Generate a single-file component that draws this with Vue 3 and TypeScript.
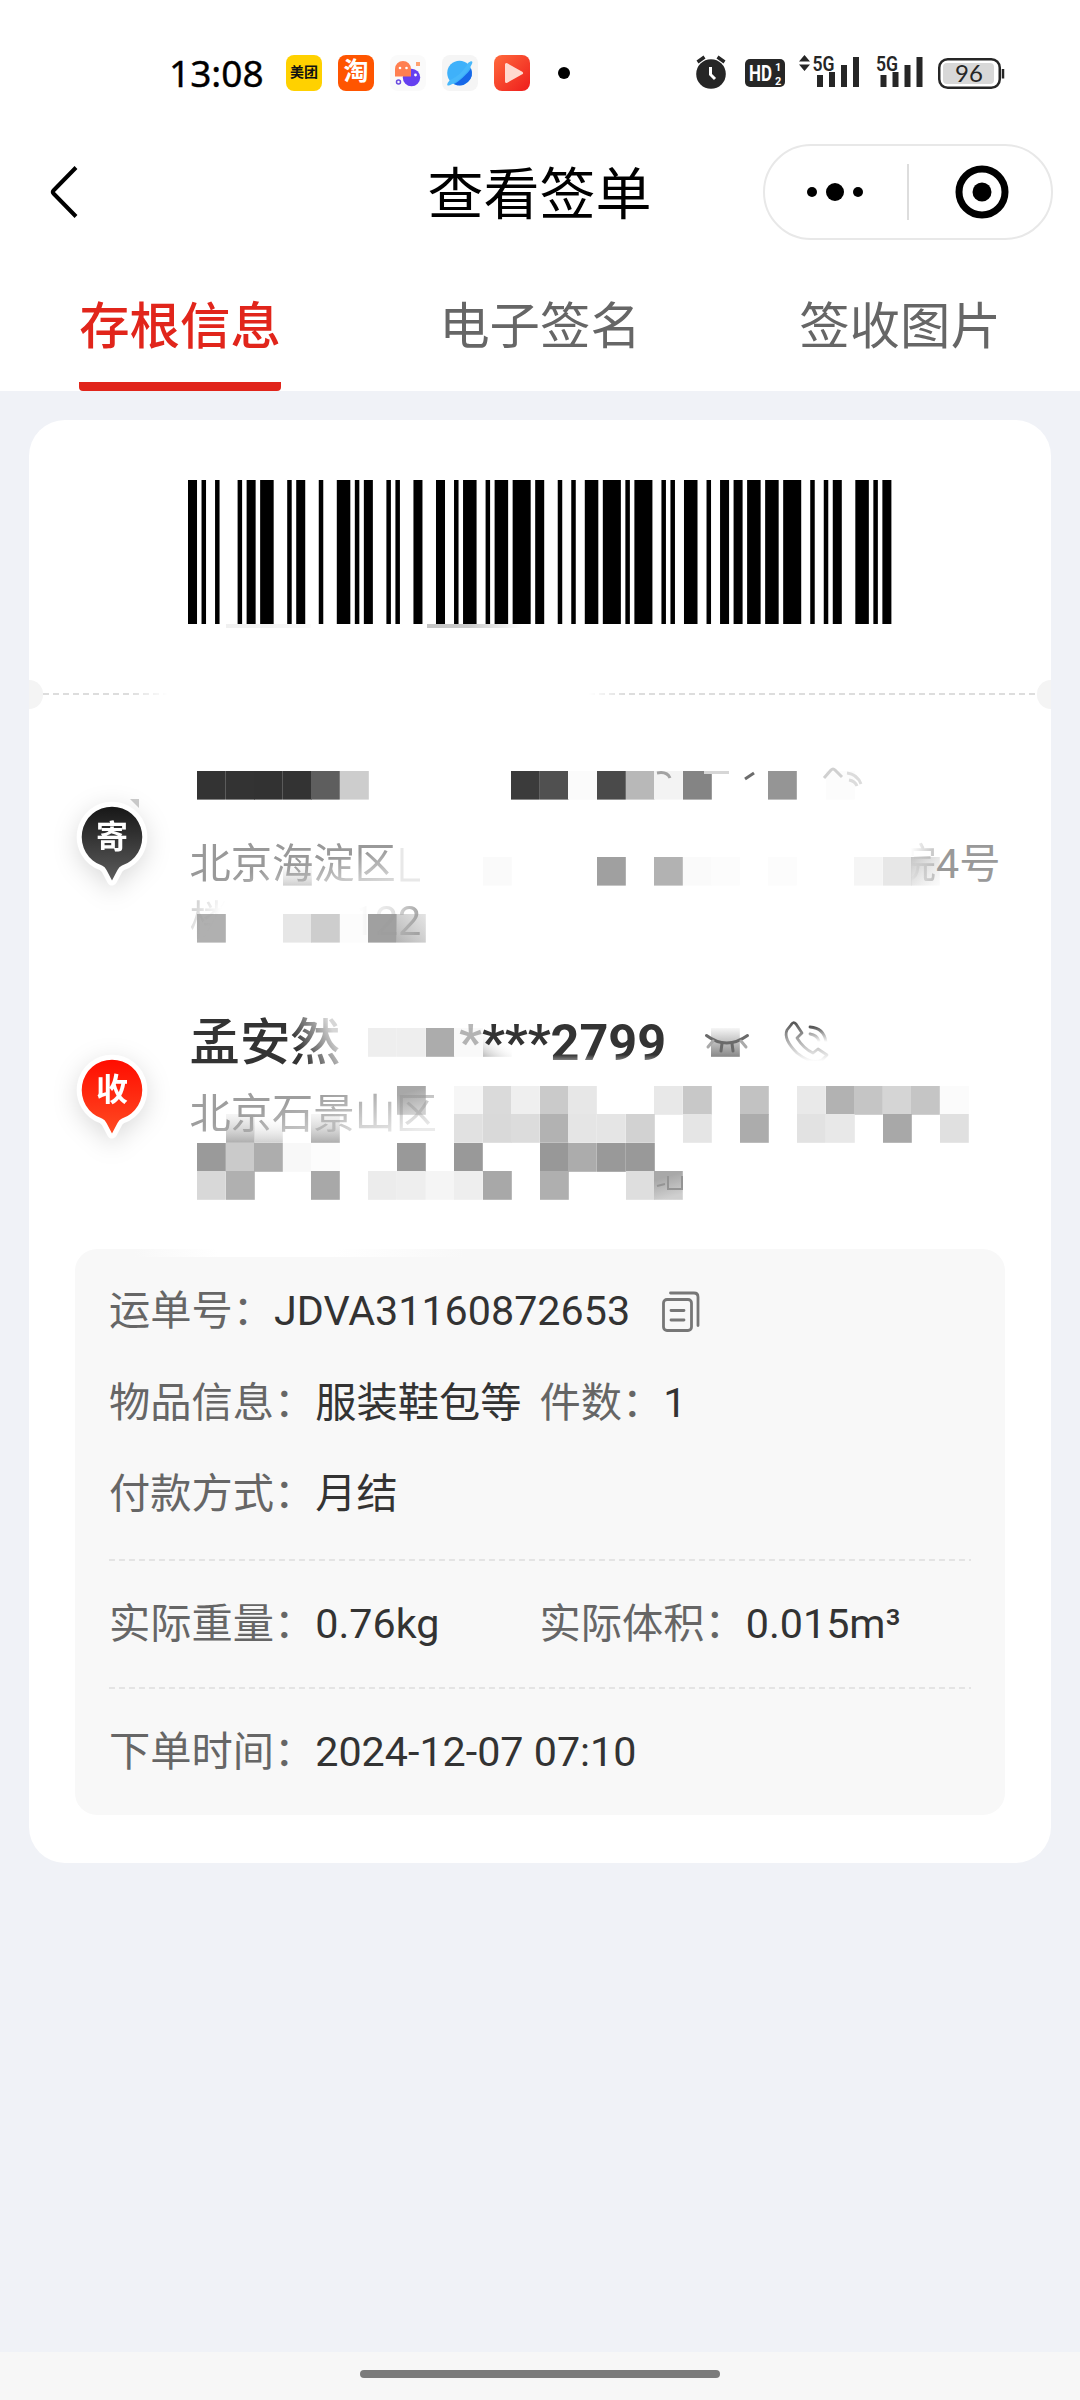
<script setup lang="ts">
interface Bar { x: number; w: number }
interface Cell { x: number; y: number; fill: string }

const tabs = ['存根信息', '电子签名', '签收图片']
const activeTab = 0

// Code 128 module widths: start B, "JDVA3", switch to C, "1160872653", checksum, stop
const symbols = [
  '211214', '112133', '112313', '311123', '111323', '221132', '113141',
  '231212', '314111', '421112', '321221', '213131', '421211', '2331112',
]

const bars: Bar[] = []
let cursor = 0
for (const symbol of symbols) {
  symbol.split('').forEach((digit, i) => {
    const w = Number(digit)
    if (i % 2 === 0) bars.push({ x: cursor, w })
    cursor += w
  })
}
const moduleCount = cursor

const CELL = 28.57
type Row = [number, Record<number, string>]
function toCells(rows: Row[]): Cell[] {
  return rows.flatMap(([y, cols]) =>
    Object.entries(cols).map(([k, fill]) => ({ x: Math.round(168 + Number(k) * CELL), y, fill })),
  )
}

const senderCells = toCells([
  [31, {
    0: '#333', 1: '#333', 2: '#323232', 3: '#333', 4: '#5e5e5e', 5: '#cdcdcd', 11: '#3b3b3b', 12: '#505050',
    13: '#fbfbfb', 14: '#4a4a4a', 15: '#b8b8b8', 16: '#f3f3f3', 17: '#848484', 20: '#959595', 22: '#fcfcfc',
  }],
  [117, {
    3: 'url(#fade-up)', 10: '#fafafa', 14: '#a0a0a0', 16: '#b2b2b2', 17: '#fafafa', 18: '#fcfcfc',
    20: '#fcfcfc', 23: '#f5f5f5', 24: '#e7e7e7', 25: 'url(#fade-side)',
  }],
  [174, { 0: '#b0b0b0', 3: '#e6e6e6', 4: '#cdcdcd', 5: '#fcfcfc', 6: '#a0a0a0', 7: 'url(#fade-soft)' }],
])

const receiverCells = toCells([
  [28, { 6: '#eee', 7: '#eee', 8: '#acacac', 9: '#f9f9f9', 10: 'url(#fade-corner)', 18: 'url(#fade-eye)' }],
  [86, {
    7: 'url(#fade-low)', 9: '#f6f6f6', 10: '#dadada', 11: '#efefef', 12: '#cacaca', 13: '#e7e7e7', 16: '#e8e8e8',
    17: '#c8c8c8', 19: '#c2c2c2', 21: '#e9e9e9', 22: '#b2b2b2', 23: '#c5c5c5', 24: '#d5d5d5', 25: '#c5c5c5', 26: '#fbfbfb',
  }],
  [114, {
    1: 'url(#fade-grey)', 2: 'url(#fade-up)', 4: 'url(#fade-grey)', 9: '#e1e1e1', 10: '#d9d9d9', 11: '#dcdcdc',
    12: '#b2b2b2', 13: '#e5e5e5', 14: '#e5e5e5', 15: '#d2d2d2', 17: '#e5e5e5', 19: '#acacac', 21: '#e2e2e2',
    22: '#e8e8e8', 24: '#a8a8a8', 26: '#e0e0e0',
  }],
  [143, {
    0: '#9a9a9a', 1: '#cacaca', 2: '#adadad', 3: '#f8f8f8', 4: '#fcfcfc', 7: '#999', 9: '#999',
    12: '#989898', 13: '#acacac', 14: '#999', 15: '#999',
  }],
  [171, {
    0: '#d8d8d8', 1: '#b0b0b0', 4: '#a8a8a8', 6: '#ececec', 7: '#eee', 8: '#f5f5f5', 9: '#eee',
    10: '#a8a8a8', 12: '#afafaf', 15: '#dedede', 16: 'url(#fade-low)',
  }],
])
</script>

<template>
  <div class="screen">
    <svg class="defs" width="0" height="0">
      <defs>
        <linearGradient id="fade-up" x1="0" y1="0" x2="0" y2="1"><stop offset="0" stop-color="#fff" stop-opacity="0" /><stop offset="1" stop-color="#cfcfcf" /></linearGradient>
        <linearGradient id="fade-grey" x1="0" y1="0" x2="0" y2="1"><stop offset="0" stop-color="#ddd" stop-opacity=".3" /><stop offset="1" stop-color="#adadad" /></linearGradient>
        <linearGradient id="fade-side" x1="0" y1="0" x2="1" y2="1"><stop offset="0" stop-color="#c4c4c4" /><stop offset="1" stop-color="#f4f4f4" stop-opacity=".4" /></linearGradient>
        <linearGradient id="fade-soft" x1="0" y1="1" x2="1" y2="0"><stop offset="0" stop-color="#b4b4b4" /><stop offset="1" stop-color="#d8d8d8" stop-opacity=".7" /></linearGradient>
        <linearGradient id="fade-corner" x1="0" y1="1" x2=".5" y2=".3"><stop offset="0" stop-color="#bbb" /><stop offset="1" stop-color="#fff" stop-opacity="0" /></linearGradient>
        <linearGradient id="fade-eye" x1="0" y1="0" x2="0" y2="1"><stop offset="0" stop-color="#f6f6f6" /><stop offset="1" stop-color="#888" /></linearGradient>
        <linearGradient id="fade-low" x1="0" y1="0" x2=".3" y2="1"><stop offset=".3" stop-color="#a8a8a8" /><stop offset="1" stop-color="#cfcfcf" /></linearGradient>
        <linearGradient id="pin-dark" x1="0" y1="0" x2="0" y2="1"><stop offset="0" stop-color="#171717" /><stop offset="1" stop-color="#5c5c5c" /></linearGradient>
        <linearGradient id="pin-red" x1="0" y1="0" x2="0" y2="1"><stop offset="0" stop-color="#ff0d00" /><stop offset="1" stop-color="#ff4a22" /></linearGradient>
        <linearGradient id="video" x1="0" y1="0" x2="1" y2="1"><stop offset="0" stop-color="#ff6a3c" /><stop offset="1" stop-color="#ee1c1c" /></linearGradient>
        <linearGradient id="phone" x1="0" y1="0" x2="0" y2="1"><stop offset="0" stop-color="#555" /><stop offset=".45" stop-color="#aaa" /><stop offset="1" stop-color="#fff" /></linearGradient>
      </defs>
    </svg>

    <div class="top">
      <div class="status">
        <span class="time">13:08</span>
        <div class="apps">
          <span class="app meituan">美团</span>
          <span class="app taobao">淘</span>
          <svg class="app" viewBox="0 0 36 36">
            <rect width="36" height="36" rx="8" fill="#fafafa" />
            <circle cx="21.5" cy="22.5" r="8.7" fill="#6540f0" />
            <path d="M5 22V14a7.8 7.8 0 0 1 16 0v7.500H5z" fill="#ff7f50" />
            <circle cx="10" cy="13" r="1.3" fill="#fff" /><circle cx="16.500" cy="13" r="1.3" fill="#fff" />
            <circle cx="25.500" cy="20" r="1.400" fill="#fff" />
            <path d="M26 7h4v4h-4z" fill="#ffa270" />
            <circle cx="8.500" cy="27" r="2" fill="none" stroke="#6a4be0" stroke-width="1.500" />
          </svg>
          <svg class="app" viewBox="0 0 36 36">
            <rect width="36" height="36" rx="8" fill="#f5f5f5" />
            <circle cx="17.500" cy="18" r="12.300" fill="#3fb1fa" />
            <path d="M12 29C18 26 26 18 29 13.500A12.300 12.300 0 0 1 12 29z" fill="#1767e8" />
            <path d="M26 8c3-2.500 5-2.500 4.200.3C28 15 14 29 7 30.500 3.500 31 6 27 8 25c7-3 14-9 18-17z" fill="#48b8fb" />
          </svg>
          <svg class="app" viewBox="0 0 36 36">
            <rect width="36" height="36" rx="8" fill="url(#video)" />
            <path d="M12.500 9.500v17l15-8.500z" fill="#ffd9cf" stroke="#ffd9cf" stroke-width="3" stroke-linejoin="round" />
          </svg>
        </div>
        <i class="more-dot"></i>
        <div class="signals">
          <svg class="alarm" width="30" height="34" viewBox="0 0 30 34">
            <circle cx="15" cy="19" r="14.800" fill="#262626" />
            <path d="M1.500 7l7-5M28.500 7l-7-5" stroke="#262626" stroke-width="3.400" />
            <path d="M14.500 12v7.500l4.500 4.500" fill="none" stroke="#fff" stroke-width="3" />
          </svg>
          <svg class="hd" width="40" height="28" viewBox="0 0 40 28">
            <rect width="40" height="28" rx="5" fill="#262626" />
            <text x="4" y="22" textLength="23" lengthAdjust="spacingAndGlyphs" font-size="22" font-weight="700" fill="#fff">HD</text>
            <text x="30" y="12" font-size="11" font-weight="700" fill="#fff">1</text>
            <text x="30" y="25.500" font-size="11" font-weight="700" fill="#fff">2</text>
          </svg>
          <svg class="cell-a" width="61" height="32" viewBox="0 0 61 32">
            <path d="M0 6.500L5.500 0l5.500 6.500zM0 9.500h11L5.500 16z" fill="#262626" />
            <text x="13.500" y="15.500" textLength="22" lengthAdjust="spacingAndGlyphs" font-size="20.500" font-weight="600" fill="#262626">5G</text>
            <path d="M18 20h6v12h-6zM30 17h6v15h-6zM42 10h6v22h-6zM54 2h6v30h-6z" fill="#262626" />
          </svg>
          <svg class="cell-b" width="48" height="32" viewBox="0 0 48 32">
            <text x="0" y="15.500" textLength="22" lengthAdjust="spacingAndGlyphs" font-size="20.500" font-weight="600" fill="#262626">5G</text>
            <path d="M4.500 20h6v12h-6zM16.500 17h6v15h-6zM28.500 10h6v22h-6zM40.500 2h6v30h-6z" fill="#262626" />
          </svg>
          <svg class="battery" width="68" height="31" viewBox="0 0 68 31">
            <rect x="1.250" y="1.250" width="60.500" height="28.500" rx="8.500" fill="#fff" stroke="#262626" stroke-width="2.500" />
            <rect x="5" y="5" width="51" height="21" rx="4" fill="#d8d8d8" />
            <path d="M65 11v9.500" stroke="#262626" stroke-width="2.500" />
            <text x="31" y="24" text-anchor="middle" font-size="24" fill="#262626" class="pct">96</text>
          </svg>
        </div>
      </div>

      <div class="navbar">
        <svg class="back" width="30" height="54" viewBox="0 0 30 54">
          <path d="M27 2.500L4.500 25.500q-1.500 1.500 0 3L27 51.500" fill="none" stroke="#000" stroke-width="4" />
        </svg>
        <h1>查看签单</h1>
        <div class="capsule">
          <svg width="56" height="20" viewBox="0 0 56 20"><circle cx="5" cy="10" r="5" /><circle cx="28" cy="10" r="9" /><circle cx="51" cy="10" r="5" /></svg>
          <i class="bar"></i>
          <svg class="ring" width="54" height="54" viewBox="0 0 54 54"><circle cx="27" cy="27" r="23" fill="none" stroke="#000" stroke-width="7" /><circle cx="27" cy="27" r="9.500" /></svg>
        </div>
      </div>

      <nav class="tabs">
        <a v-for="(tab, i) in tabs" :key="tab" class="tab" :class="{ active: i === activeTab }"><span>{{ tab }}</span></a>
      </nav>
    </div>

    <main class="card">
      <div class="code">
        <svg class="barcode" width="703.400" height="144" :viewBox="`0 0 ${moduleCount} 144`" preserveAspectRatio="none">
          <rect v-for="b in bars" :key="b.x" :x="b.x" y="0" :width="b.w" height="144" />
        </svg>
        <div class="smears"><i class="smear light"></i><i class="smear"></i></div>
      </div>

      <div class="tear"><i class="notch left"></i><i class="dash start"></i><i class="dash end"></i><i class="notch right"></i></div>

      <section class="contact sender">
        <svg class="mosaic" width="1022" height="260">
          <rect v-for="c in senderCells" :key="`${c.x}-${c.y}`" :x="c.x" :y="c.y" width="28.800" height="28.600" :fill="c.fill" />
          <g fill="none" stroke-width="3">
            <path d="M795 38l7-8q2-2 4 0l7 7" stroke="#d0d0d0" /><path d="M818 33q10 1 14 11M820 40q6 1 8 6" stroke="#dcdcdc" />
            <path d="M373 108v32h18" stroke="#e8e8e8" /><path d="M675 32.500h25" stroke="#d6d6d6" />
            <path d="M628 33q10-2 13 5" stroke="#a2a2a2" /><path d="M716 39l9-6" stroke="#6c6c6c" />
          </g>
          <path d="M101 59h9v9z" fill="#ccc" />
        </svg>
        <svg class="pin" width="76" height="92" viewBox="-38 -38 76 92">
          <path d="M0-30.300A30.300 30.300 0 0 1 10 28.600Q7 30 5.500 33L0 43.500-5.500 33Q-7 30-10 28.600A30.300 30.300 0 0 1 0-30.300z" fill="#fff" stroke="#fff" stroke-width="10" stroke-linejoin="round" />
          <path d="M0-30.300A30.300 30.300 0 0 1 10 28.600Q7 30 5.500 33L0 43.500-5.500 33Q-7 30-10 28.600A30.300 30.300 0 0 1 0-30.300z" fill="url(#pin-dark)" />
          <text x="0" y="11" text-anchor="middle" font-size="32" font-weight="700" fill="#fff">寄</text>
        </svg>
        <div class="lines">
          <div class="who"></div>
          <div class="addr split"><span class="fade-a">北京海淀区</span><span><span class="fade-b">院</span>4号</span></div>
          <div class="addr"><span class="fade-c">楼</span><span class="fade-d">122</span></div>
        </div>
      </section>

      <section class="contact receiver">
        <svg class="mosaic" width="1022" height="249">
          <rect v-for="c in receiverCells" :key="`${c.x}-${c.y}`" :x="c.x" :y="c.y" width="28.800" height="28.800" :fill="c.fill" />
          <path d="M639 176v13h14v-13M628 186l8-2" fill="none" stroke="#949494" stroke-width="2" />
        </svg>
        <svg class="pin" width="76" height="92" viewBox="-38 -38 76 92">
          <path d="M0-30.300A30.300 30.300 0 0 1 10 28.600Q7 30 5.500 33L0 43.500-5.500 33Q-7 30-10 28.600A30.300 30.300 0 0 1 0-30.300z" fill="#fff" stroke="#fff" stroke-width="10" stroke-linejoin="round" />
          <path d="M0-30.300A30.300 30.300 0 0 1 10 28.600Q7 30 5.500 33L0 43.500-5.500 33Q-7 30-10 28.600A30.300 30.300 0 0 1 0-30.300z" fill="url(#pin-red)" />
          <text x="0" y="11" text-anchor="middle" font-size="32" font-weight="700" fill="#fff">收</text>
        </svg>
        <div class="lines">
          <div class="who">
            <span class="name">孟安然</span>
            <span class="phone"><span class="ghost">*</span>***2799</span>
            <svg class="eye" width="44" height="22" viewBox="0 0 44 22" fill="none" stroke="#6a6a6a" stroke-width="3" stroke-linecap="round">
              <path d="M1.500 2.500Q21.500 17.500 42.500 2.500" /><path d="M17 10.500l-1 7.500M27 10.500l1 7.500" /><path d="M8 8l-5 6M36 8l5 6" stroke="#aaa" />
            </svg>
            <svg class="call" width="44" height="44" viewBox="0 0 44 44" fill="none" stroke="url(#phone)" stroke-width="2.800" stroke-linecap="round" stroke-linejoin="round">
              <path d="M7 4L3 9Q-1 18 13 32 28 44 38 39L43 34 34 28 29 32Q20 28 13 17L18 12 12 3Q9 0 7 4z" />
              <path d="M26 6Q40 7 42 21M26 13Q33 14 35 20" />
            </svg>
          </div>
          <div class="addr"><span class="fade-e">北京石景山区</span></div>
        </div>
      </section>

      <section class="info">
        <i class="wash"></i>
        <div class="row"><label>运单号：</label><b>JDVA31160872653</b>
          <svg class="copy" width="38" height="42" viewBox="0 0 38 42" fill="none" stroke="#777" stroke-width="2.800" stroke-linecap="round">
            <rect x="1.500" y="8.500" width="28" height="31" rx="3.500" /><path d="M8.500 2H32q4 0 4 4v28.500M9 19.500h13M9 29h13" />
          </svg>
        </div>
        <div class="row"><div class="half"><label>物品信息：</label><b>服装鞋包等</b></div><label>件数：</label><b>1</b></div>
        <div class="row"><label>付款方式：</label><b>月结</b></div>
        <i class="rule first"></i>
        <div class="row solo"><div class="half"><label>实际重量：</label><b>0.76kg</b></div><label>实际体积：</label><b>0.015m³</b></div>
        <i class="rule"></i>
        <div class="row solo"><label>下单时间：</label><b>2024-12-07 07:10</b></div>
      </section>
    </main>

    <footer class="gesture"><i></i></footer>
  </div>
</template>

<style>
body { margin: 0; background: #f0f2f7; }
</style>

<style scoped>
.screen { display: flex; flex-direction: column; width: 1080px; height: 2400px; background: #f0f2f7; font-family: Roboto, "Noto Sans CJK SC", sans-serif; overflow: hidden; }
.screen i { display: block; font-style: normal; }
.screen svg { display: block; flex: none; overflow: visible; }
.defs { position: absolute; }
.top { height: 391px; background: #fff; }

.status { display: flex; align-items: center; height: 146px; margin-bottom: -2px; box-sizing: border-box; padding-left: 169px; }
.time { width: 117px; font: 400 37px/50px "Noto Sans", sans-serif; color: #000; white-space: nowrap; -webkit-text-stroke: .4px #000; }
.apps { display: flex; gap: 16px; }
.app { width: 36px; height: 36px; border-radius: 8px; text-align: center; }
.meituan { background: #ffd100; color: #111; font-size: 14px; font-weight: 700; line-height: 35px; }
.taobao { background: #ff5500; color: #fff; font-size: 25px; font-weight: 700; line-height: 34px; }
.more-dot { width: 12px; height: 12px; margin-left: 28px; border-radius: 50%; background: #000; }
.signals { display: flex; align-items: center; margin-left: 126px; }
.alarm { margin-top: -2px; }
.hd { margin-left: 19px; }
.cell-a { margin: -4px 0 0 14px; }
.cell-b { margin: -4px 0 0 16px; }
.battery { margin-left: 14px; }
.signals text { font-family: Roboto, sans-serif; }
.signals .pct { font-family: Lato, sans-serif; }

.navbar { display: flex; align-items: center; height: 96px; padding: 0 27px 0 49px; justify-content: space-between; }
.navbar h1 { width: 224px; margin: 6px 0 0 237px; font-size: 56px; line-height: 80px; font-weight: 400; color: #000; white-space: nowrap; }
.capsule { display: flex; align-items: center; width: 290px; height: 96px; box-sizing: border-box; border: 2px solid #e8e8e8; border-radius: 48px; padding-left: 42px; }
.bar { width: 2px; height: 56px; margin-left: 44px; background: #ddd; }
.ring { margin-left: 46px; }

.tabs { display: flex; height: 151px; }
.tab { display: flex; flex: 1; justify-content: center; font-size: 50.400px; line-height: 70px; color: #666; }
.tab span { box-sizing: border-box; width: 202px; height: 151px; padding-top: 52px; text-align: center; white-space: nowrap; }
.tab.active { color: #e1251b; font-weight: 500; }
.tab.active span { background: linear-gradient(#e1251b, #e1251b) bottom / 100% 9px no-repeat; border-radius: 0 0 4px 4px; }

.card { width: 1022px; height: 1443px; margin: 29px 0 0 29px; border-radius: 36px; background: #fff; }
.code { display: flex; flex-direction: column; align-items: center; height: 259px; padding-top: 60px; box-sizing: border-box; }
.smears { display: flex; width: 703px; gap: 116px; padding-left: 37px; box-sizing: border-box; }
.smear { width: 95px; height: 4px; background: linear-gradient(90deg, #c4c4c4, #ccc 45%, #fff); }
.smear.light { width: 85px; background: linear-gradient(90deg, #f0f0f0, #f4f4f4 65%, #fbfbfb); }

.tear { display: flex; align-items: center; height: 30px; }
.notch { width: 14px; height: 29px; background: #f4f4f4; }
.notch.left { border-radius: 0 15px 15px 0; }
.notch.right { border-radius: 15px 0 0 15px; }
.dash { height: 2px; background: repeating-linear-gradient(90deg, #ddd 0 6px, transparent 6px 10px); }
.dash.start { width: 125px; mask-image: linear-gradient(90deg, #000 70%, transparent); }
.dash.end { width: 448px; margin-left: 421px; mask-image: linear-gradient(90deg, transparent, #000 8%); }

.contact { position: relative; display: flex; }
.sender { height: 291px; }
.receiver { height: 249px; }
.sender .mosaic { top: 31px; }
.mosaic { position: absolute; left: 0; top: 0; }
.pin { position: relative; margin-left: 45px; filter: drop-shadow(0 6px 12px rgba(0, 0, 0, .14)); }
.pin text { font-family: "Noto Sans CJK SC", sans-serif; }
.sender .pin { margin-top: 90px; }
.receiver .pin { margin-top: 52px; }
.lines { position: relative; width: 811px; margin-left: 39.500px; }
.who { display: flex; align-items: center; height: 86px; font-size: 50px; line-height: 84px; color: #333; white-space: nowrap; }
.sender .who { height: 127px; }
.addr { height: 57px; font-size: 41.250px; line-height: 57px; color: #999; white-space: nowrap; }
.split { display: flex; justify-content: space-between; }
.name { width: 152px; font-size: 50.400px; font-weight: 500; mask-image: linear-gradient(65deg, #000 65%, rgba(0, 0, 0, .2) 88%); }
.phone { margin-left: 117.500px; font-size: 50.400px; font-weight: 700; mask-image: linear-gradient(#000 64%, rgba(0, 0, 0, .4) 74%); }
.ghost { opacity: .35; }
.eye { margin: 2px 0 0 39px; }
.call { margin-left: 35px; }
.fade-a { mask-image: linear-gradient(170deg, #000 50%, rgba(0, 0, 0, .3) 90%); }
.fade-b { mask-image: linear-gradient(90deg, transparent 38%, rgba(0, 0, 0, .6)); }
.fade-c { display: inline-block; mask-image: linear-gradient(120deg, rgba(0, 0, 0, .4) 20%, transparent 55%); }
.fade-d { display: inline-block; margin-left: 121px; mask-image: linear-gradient(90deg, transparent 10%, rgba(0, 0, 0, .3) 60%, rgba(0, 0, 0, .9)); }
.fade-e { display: inline-block; mask-image: linear-gradient(165deg, rgba(0, 0, 0, .95) 35%, rgba(0, 0, 0, .2) 85%); }

.info { position: relative; width: 930px; height: 566px; margin-left: 46px; padding: 16px 34px 0; box-sizing: border-box; border-radius: 22px; background: #f8f8f8; }
.wash { position: absolute; left: 60px; top: 0; width: 330px; height: 8px; background: linear-gradient(90deg, #f8f8f8, #fff 25%, #fff 60%, #f8f8f8); }
.row { display: flex; align-items: center; height: 91.700px; font-size: 41.250px; line-height: 60px; color: #333; white-space: nowrap; }
.row label { color: #666; }
.row b { font-weight: 400; }
.half { display: flex; width: 430.500px; }
.copy { margin: 3px 0 0 32px; }
.rule { height: 2px; background: repeating-linear-gradient(90deg, #e4e4e4 0 6px, transparent 6px 10px); }
.rule.first { margin-top: 19px; }
.row.solo { height: 126px; }

.gesture { display: flex; justify-content: center; align-items: flex-start; height: 48px; margin-top: auto; padding-top: 18px; box-sizing: border-box; background: #f7f7f7; }
.gesture i { width: 360px; height: 8px; border-radius: 4px; background: #7b7b7b; }
</style>
